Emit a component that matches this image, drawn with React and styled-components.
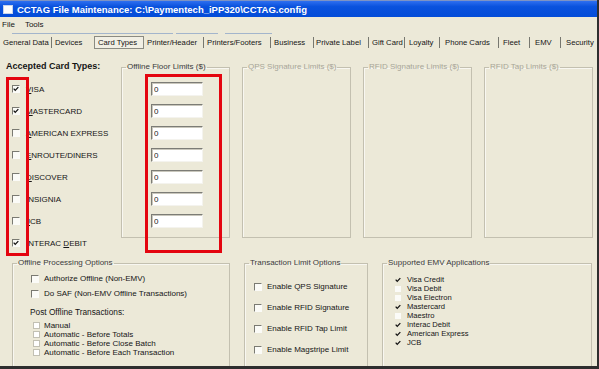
import React from "react"
import styled, { createGlobalStyle } from "styled-components"

const GlobalStyle = createGlobalStyle`
  html, body {
    margin: 0;
    padding: 0;
    background: #ece9d8;
  }
  body {
    font-family: "Liberation Sans", Arial, sans-serif;
  }
`

const Window = styled.div`
  position: relative;
  width: 599px;
  height: 369px;
  box-sizing: border-box;
  overflow: hidden;
  display: flex;
  flex-direction: column;
  background: #ece9d8;
  border-right: 2px solid #2e2e2e;
  border-bottom: 3px solid #2e2e2e;
  font-family: "Liberation Sans", Arial, sans-serif;
  font-size: 8px;
  color: #151515;
`

const TitleBar = styled.div`
  height: 17px;
  flex: none;
  display: flex;
  align-items: center;
  gap: 4px;
  padding-left: 3px;
  box-sizing: border-box;
  border-top: 1px solid #7d93c4;
  background: linear-gradient(#2e6ff0 0%, #0a52dd 35%, #034cd8 100%);
`

const TitleIcon = styled.span`
  width: 8px;
  height: 7px;
  background: #fdfdfd;
  border: 1px solid #c8d4ec;
`

const TitleText = styled.span`
  color: #fff;
  font-weight: bold;
  font-size: 9.5px;
  white-space: nowrap;
`

const MenuBar = styled.div`
  height: 15px;
  flex: none;
  display: flex;
  align-items: center;
  gap: 10px;
  padding-left: 2px;
`

const MenuItem = styled.span`
  font-size: 8px;
`

const Rule = styled.div`
  height: 3px;
  flex: none;
  display: flex;
  align-items: center;
  padding-left: 12px;
`

const RuleSegment = styled.span`
  width: ${p => p.$w}px;
  margin-right: ${p => p.$gap}px;
  height: 1px;
  background: #a3b5cc;
`

const TabStrip = styled.div`
  height: 14px;
  flex: none;
  display: flex;
  align-items: center;
  white-space: nowrap;
  font-size: 7.7px;
`

const Tab = styled.span`
  width: ${p => p.$w}px;
  height: 11px;
  box-sizing: border-box;
  flex: none;
  display: flex;
  align-items: center;
  padding-left: ${p => p.$pad}px;
  border-right: ${p => (p.$sep ? "1px solid #77776f" : "none")};
`

const ActiveTab = styled.span`
  width: 50px;
  height: 13px;
  box-sizing: border-box;
  flex: none;
  display: flex;
  align-items: center;
  padding-left: 3px;
  margin-right: 2px;
  border: 1px solid #8b8b82;
  background: #f1efe4;
`

const TopSection = styled.div`
  display: flex;
  padding-left: 6px;
  margin-top: 11px;
`

const CardColumn = styled.div`
  width: 115px;
  flex: none;
  display: flex;
  flex-direction: column;
`

const Heading = styled.div`
  font-weight: bold;
  font-size: 9px;
  line-height: 12px;
  margin-bottom: 6px;
  white-space: nowrap;
`

const CardRow = styled.label`
  height: 22px;
  display: flex;
  align-items: center;
  gap: 6px;
  padding-left: 6px;
  font-size: 8px;
  white-space: nowrap;
`

const Key = styled.span`
  text-decoration: underline;
`

const LimitGrid = styled.div`
  display: grid;
  grid-template-columns: repeat(4, 109px);
  column-gap: 12px;
  margin-top: 2px;
  height: 176px;
`

const GroupBox = styled.fieldset`
  margin: 0;
  padding: 0;
  min-width: 0;
  box-sizing: border-box;
  width: ${p => (p.$w ? `${p.$w}px` : "auto")};
  height: ${p => p.$h}px;
  border: 1px solid #c3c0b0;
  box-shadow: inset 1px 1px 0 #f8f7f1;
`

const GroupTitle = styled.legend`
  margin-left: 4px;
  padding: 0 1px;
  font-size: 8px;
  line-height: 10px;
  color: ${p => (p.$disabled ? "#a7a597" : "#3a3a3a")};
  white-space: nowrap;
`

const InputStack = styled.div`
  display: flex;
  flex-direction: column;
  gap: 8px;
  padding: 10px 0 0 29px;
`

const NumberField = styled.input`
  width: 52px;
  height: 14px;
  box-sizing: border-box;
  margin: 0;
  padding: 0 2px;
  border: 1px solid;
  border-color: #7c7c76 #f4f3ee #f4f3ee #7c7c76;
  box-shadow: inset 1px 1px 0 #c9c7bc;
  background: #fff;
  font-family: "Liberation Sans", Arial, sans-serif;
  font-size: 8px;
  color: #222;
  outline: none;
`

const BottomSection = styled.div`
  display: flex;
  gap: 14px;
  padding-left: 12px;
  margin-top: 4px;
`

const OptionList = styled.div`
  display: flex;
  flex-direction: column;
  padding: ${p => p.$pad};
`

const OptionRow = styled.label`
  height: ${p => p.$h}px;
  display: flex;
  align-items: center;
  gap: ${p => p.$gap}px;
  font-size: ${p => p.$size || 8}px;
  white-space: nowrap;
`

const SubHeading = styled.div`
  margin: 5px 0 3px 17px;
  line-height: 12px;
  font-size: 8.3px;
`

const ClassicBox = styled.span`
  width: 8px;
  height: 8px;
  flex: none;
  box-sizing: border-box;
  display: flex;
  align-items: center;
  justify-content: center;
  border-top: 1px solid #7a7a72;
  border-left: 1px solid #7a7a72;
  border-right: 1px solid #fbfbf8;
  border-bottom: 1px solid #fbfbf8;
  background: #fbfbf7;
`

const FlatBox = styled.span`
  width: 7px;
  height: 7px;
  flex: none;
  box-sizing: border-box;
  border: 1px solid #c2c0b3;
  background: #fff;
`

const ListBox = styled.span`
  width: 6px;
  height: 6px;
  flex: none;
  display: flex;
  align-items: center;
  justify-content: center;
  background: ${p => (p.$checked ? "transparent" : "#fbfbf8")};
`

const Highlight = styled.div`
  position: absolute;
  box-sizing: border-box;
  border: 3px solid #e4050f;
  left: ${p => p.$x}px;
  top: ${p => p.$y}px;
  width: ${p => p.$w}px;
  height: ${p => p.$h}px;
`

const Tick = () => (
  <svg width="7" height="6" viewBox="0 0 7 6">
    <path d="M0.8 2.6 L2.6 4.6 L6.2 0.8" fill="none" stroke="#111" strokeWidth="1.5" />
  </svg>
)

const tabs = [
  { label: "General Data", w: 52, pad: 3, sep: true },
  { label: "Devices", w: 42, pad: 3, sep: false },
  { label: "Card Types", active: true },
  { label: "Printer/Header", w: 58, pad: 1, sep: true },
  { label: "Printers/Footers", w: 67, pad: 3, sep: true },
  { label: "Business", w: 43, pad: 3, sep: true },
  { label: "Private Label", w: 55, pad: 2, sep: true },
  { label: "Gift Card", w: 36, pad: 3, sep: true },
  { label: "Loyalty", w: 35, pad: 4, sep: true },
  { label: "Phone Cards", w: 59, pad: 5, sep: true },
  { label: "Fleet", w: 31, pad: 4, sep: true },
  { label: "EMV", w: 31, pad: 5, sep: true },
  { label: "Security", w: 40, pad: 5, sep: false },
]

const cards = [
  { key: "V", rest: "ISA", checked: true, limit: true },
  { key: "M", rest: "ASTERCARD", checked: true, limit: true },
  { key: "A", rest: "MERICAN EXPRESS", limit: true },
  { key: "E", rest: "NROUTE/DINERS", limit: true },
  { key: "D", rest: "ISCOVER", limit: true },
  { key: "I", rest: "NSIGNIA", limit: true },
  { key: "J", rest: "CB", limit: true },
  { key: "I", rest: "NTERAC ", tail: ["D", "EBIT"], checked: true },
]

const postOptions = [
  "Manual",
  "Automatic - Before Totals",
  "Automatic - Before Close Batch",
  "Automatic - Before Each Transaction",
]

const limitOptions = [
  "Enable QPS Signature",
  "Enable RFID Signature",
  "Enable RFID Tap Limit",
  "Enable Magstripe Limit",
]

const emvApps = [
  { name: "Visa Credit", checked: true },
  { name: "Visa Debit" },
  { name: "Visa Electron" },
  { name: "Mastercard", checked: true },
  { name: "Maestro" },
  { name: "Interac Debit", checked: true },
  { name: "American Express", checked: true },
  { name: "JCB", checked: true },
]

const App = () => (
  <Window>
    <GlobalStyle />
    <TitleBar>
      <TitleIcon />
      <TitleText>CCTAG File Maintenance: C:\Paymentech_iPP320\CCTAG.config</TitleText>
    </TitleBar>

    <MenuBar>
      <MenuItem>File</MenuItem>
      <MenuItem>Tools</MenuItem>
    </MenuBar>

    <Rule>
      <RuleSegment $w={161} $gap={3} />
      <RuleSegment $w={42} $gap={7} />
      <RuleSegment $w={47} $gap={0} />
    </Rule>

    <TabStrip>
      {tabs.map(t =>
        t.active ? (
          <ActiveTab key={t.label}>{t.label}</ActiveTab>
        ) : (
          <Tab key={t.label} $w={t.w} $pad={t.pad} $sep={t.sep}>
            {t.label}
          </Tab>
        )
      )}
    </TabStrip>

    <TopSection>
      <CardColumn>
        <Heading>Accepted Card Types:</Heading>
        {cards.map((c, i) => (
          <CardRow key={i}>
            <ClassicBox>{c.checked && <Tick />}</ClassicBox>
            <span>
              <Key>{c.key}</Key>
              {c.rest}
              {c.tail && (
                <>
                  <Key>{c.tail[0]}</Key>
                  {c.tail[1]}
                </>
              )}
            </span>
          </CardRow>
        ))}
      </CardColumn>

      <LimitGrid>
        <GroupBox $h={176}>
          <GroupTitle>Offline Floor Limits ($)</GroupTitle>
          <InputStack>
            {cards
              .filter(c => c.limit)
              .map((c, i) => (
                <NumberField key={i} defaultValue="0" />
              ))}
          </InputStack>
        </GroupBox>
        <GroupBox $h={176}>
          <GroupTitle $disabled>QPS Signature Limits ($)</GroupTitle>
        </GroupBox>
        <GroupBox $h={176}>
          <GroupTitle $disabled>RFID Signature Limits ($)</GroupTitle>
        </GroupBox>
        <GroupBox $h={176}>
          <GroupTitle $disabled>RFID Tap Limits ($)</GroupTitle>
        </GroupBox>
      </LimitGrid>
    </TopSection>

    <BottomSection>
      <GroupBox $w={218} $h={140}>
        <GroupTitle>Offline Processing Options</GroupTitle>
        <OptionList $pad="3px 0 0 18px">
          <OptionRow $h={15} $gap={5}>
            <ClassicBox />
            Authorize Offline (Non-EMV)
          </OptionRow>
          <OptionRow $h={15} $gap={5}>
            <ClassicBox />
            Do SAF (Non-EMV Offline Transactions)
          </OptionRow>
        </OptionList>
        <SubHeading>Post Offline Transactions:</SubHeading>
        <OptionList $pad="0 0 0 20px">
          {postOptions.map(o => (
            <OptionRow key={o} $h={9} $gap={4} $size={8}>
              <FlatBox />
              {o}
            </OptionRow>
          ))}
        </OptionList>
      </GroupBox>

      <GroupBox $w={124} $h={140}>
        <GroupTitle>Transaction Limit Options</GroupTitle>
        <OptionList $pad="8px 0 0 9px">
          {limitOptions.map(o => (
            <OptionRow key={o} $h={21} $gap={5}>
              <ClassicBox />
              {o}
            </OptionRow>
          ))}
        </OptionList>
      </GroupBox>

      <GroupBox $w={210} $h={140}>
        <GroupTitle>Supported EMV Applications</GroupTitle>
        <OptionList $pad="7px 0 0 12px">
          {emvApps.map(a => (
            <OptionRow key={a.name} $h={9} $gap={6} $size={7.6}>
              <ListBox $checked={a.checked}>{a.checked && <Tick />}</ListBox>
              {a.name}
            </OptionRow>
          ))}
        </OptionList>
      </GroupBox>
    </BottomSection>

    <Highlight $x={6} $y={77} $w={23} $h={179} />
    <Highlight $x={145} $y={74} $w={77} $h={179} />
  </Window>
)

export default App
